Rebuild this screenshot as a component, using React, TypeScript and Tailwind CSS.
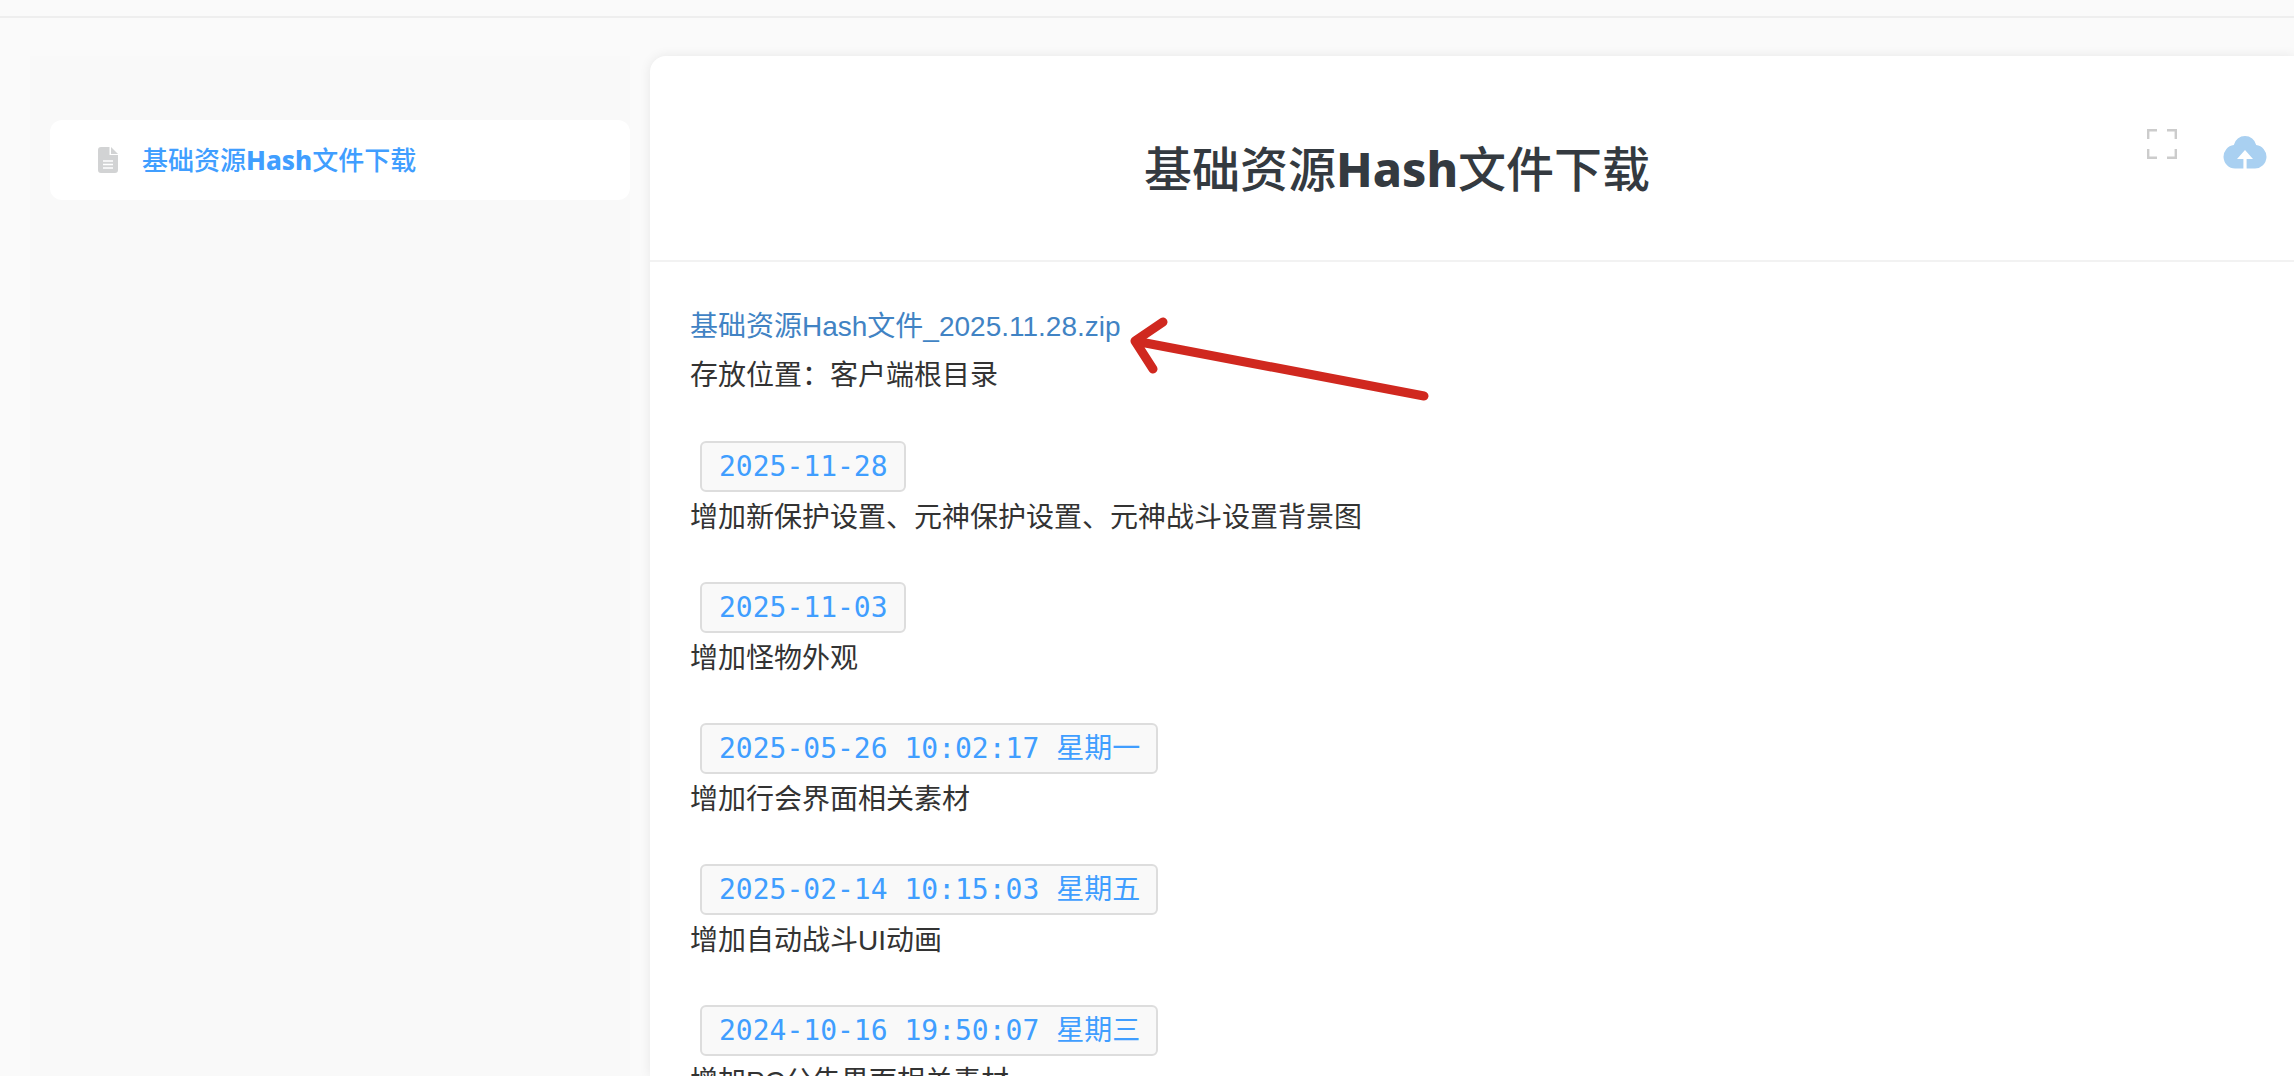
const entries = [
  { date: '2025-11-28', note: '增加新保护设置、元神保护设置、元神战斗设置背景图' },
  { date: '2025-11-03', note: '增加怪物外观' },
  { date: '2025-05-26 10:02:17 星期一', note: '增加行会界面相关素材' },
  { date: '2025-02-14 10:15:03 星期五', note: '增加自动战斗UI动画' },
  { date: '2024-10-16 19:50:07 星期三', note: '增加PC公告界面相关素材' },
];

function DocIcon() {
  return (
    <svg viewBox="0 0 20 26" className="h-[26px] w-5 shrink-0" aria-hidden="true">
      <path d="M3 0H11.5V8H20V23A3 3 0 0 1 17 26H3A3 3 0 0 1 0 23V3A3 3 0 0 1 3 0Z" fill="#d2d3d4" />
      <path d="M13 0L20 7H13Z" fill="#d2d3d4" />
      <path d="M5 14H15M5 17.5H15M5 21H15" stroke="#fff" strokeWidth="1.6" />
    </svg>
  );
}

function ExpandIcon() {
  return (
    <svg viewBox="0 0 30 30" className="h-[30px] w-[30px]" fill="none" stroke="#cccccc" strokeWidth="2.4" aria-hidden="true">
      <path d="M1.2 10V1.2H10M20 1.2H28.8V10M28.8 20V28.8H20M10 28.8H1.2V20" />
    </svg>
  );
}

function CloudIcon() {
  return (
    <svg viewBox="0 0 44 34" className="h-[34px] w-11" aria-hidden="true">
      <path
        d="M12 33.5A11.8 11.8 0 0 1 10.8 10A11.5 11.5 0 0 1 33.2 10A11.8 11.8 0 0 1 32 33.5H23.6V24H30L22 15L14 24H20.4V33.5Z"
        fill="#a9d0f1"
      />
    </svg>
  );
}

function ResourceTitle() {
  return (
    <span>
      基础资源<span className="font-extrabold">Hash</span>文件下载
    </span>
  );
}

export default function App() {
  return (
    <div className="flex h-screen flex-col overflow-hidden bg-[#fafafa] font-['Liberation_Sans','Noto_Sans_CJK_SC',sans-serif] text-[28px] leading-[49px] text-[#333333]">
      <header className="h-[18px] shrink-0 border-b-2 border-[#eeeeee]" />
      <div className="flex min-h-0 flex-1 pt-[38px] pl-[30px]">
        <nav className="w-[600px] shrink-0 bg-[#f9f9f9] pt-16 pl-5">
          <a
            href="#hash"
            className="flex h-20 items-center gap-6 rounded-xl bg-white pl-12 font-['Noto_Sans','Noto_Sans_CJK_SC',sans-serif] text-[26px] font-medium text-[#409eff]"
          >
            <DocIcon />
            <ResourceTitle />
          </a>
        </nav>
        <main className="ml-5 min-w-0 flex-1 rounded-tl-2xl bg-white shadow-[0_0_12px_rgba(0,0,0,0.08)]">
          <div className="relative flex h-[206px] items-center justify-center border-b-2 border-[#f2f2f2] pt-[22px] pr-[150px]">
            <h1 className="font-['Noto_Sans','Noto_Sans_CJK_SC',sans-serif] text-5xl font-medium text-[#343a40]">
              <ResourceTitle />
            </h1>
            <div className="absolute top-[73px] right-[27px] flex gap-[46px]">
              <button type="button" aria-label="全屏" className="h-[30px]">
                <ExpandIcon />
              </button>
              <button type="button" aria-label="上传" className="mt-1.5 h-[34px]">
                <CloudIcon />
              </button>
            </div>
          </div>
          <article className="px-10 pt-10">
            <p>
              <span className="relative inline-block">
                <a href="#zip" className="text-[#4183c4]">
                  基础资源Hash文件_2025.11.28.zip
                </a>
                <svg
                  viewBox="0 0 300 90"
                  className="pointer-events-none absolute top-3 left-full ml-2 h-[90px] w-[300px]"
                  fill="none"
                  stroke="#d0281f"
                  strokeWidth="9"
                  strokeLinecap="round"
                  strokeLinejoin="round"
                  aria-hidden="true"
                >
                  <path d="M295 82L6 27M34 8L6 27L24 55" />
                </svg>
              </span>
            </p>
            <p className="mb-[41px]">存放位置：客户端根目录</p>
            {entries.map((entry) => (
              <section key={entry.date} className="mb-10">
                <code className="mb-px ml-[10px] block h-[51px] w-fit rounded-md border-2 border-[#dddddd] bg-[#f9f9f9] pr-4 pl-[17px] font-['DejaVu_Sans_Mono','Noto_Sans_CJK_SC',monospace] leading-[47px] whitespace-nowrap text-[#409eff]">
                  {entry.date}
                </code>
                <p>{entry.note}</p>
              </section>
            ))}
          </article>
        </main>
      </div>
    </div>
  );
}
